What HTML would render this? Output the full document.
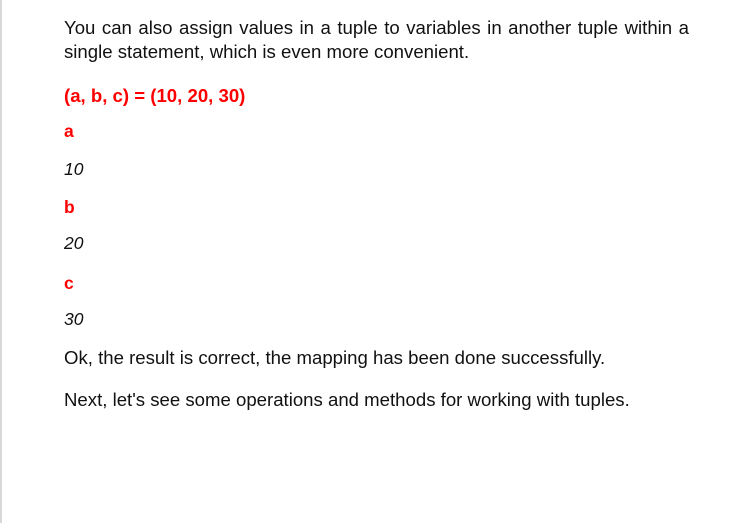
<!DOCTYPE html>
<html><head><style>
html,body{margin:0;padding:0;width:751px;height:523px;background:#fff;overflow:hidden}
body{font-family:"Liberation Sans",Arial,sans-serif;color:#111;position:relative}
.bl{position:absolute;left:0;top:0;width:2px;height:523px;background:#d8d8d8}
.t{position:absolute;left:64px;font-size:18.6px;line-height:24px;white-space:nowrap}
.p{white-space:normal;width:625px;text-align:justify;text-align-last:left}
.r{color:#f00;font-weight:bold}
.i{font-style:italic}
.s{font-size:17.5px}
</style></head><body>
<div class="bl"></div>
<div class="t p" style="top:16px">You can also assign values in a tuple to variables in another tuple within a single statement, which is even more convenient.</div>
<div class="t r" style="top:84px">(a, b, c) = (10, 20, 30)</div>
<div class="t r s" style="top:119px">a</div>
<div class="t i s" style="top:157px">10</div>
<div class="t r s" style="top:195px">b</div>
<div class="t i s" style="top:231px">20</div>
<div class="t r s" style="top:271px">c</div>
<div class="t i s" style="top:307px">30</div>
<div class="t" style="top:346px">Ok, the result is correct, the mapping has been done successfully.</div>
<div class="t" style="top:388px">Next, let's see some operations and methods for working with tuples.</div>
</body></html>
